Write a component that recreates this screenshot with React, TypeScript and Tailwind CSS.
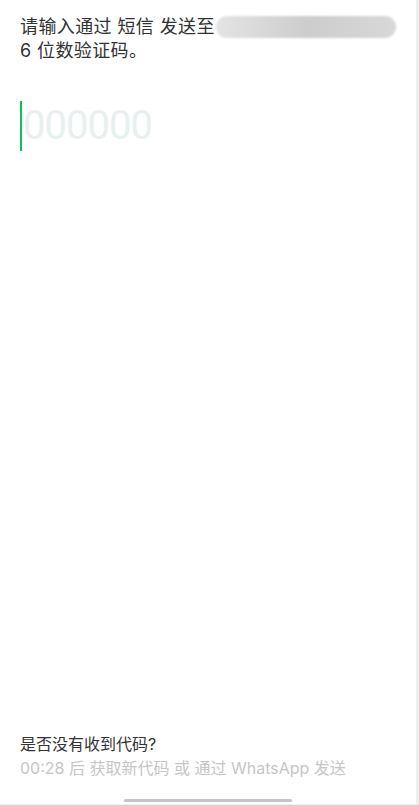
export default function App() {
  return (
    <div className="h-[805px] w-full bg-white border-r-[3px] border-[#efefef] flex flex-col font-['Inter','Noto_Sans_CJK_SC',sans-serif] overflow-hidden">
      {/* Prompt */}
      <div className="px-5 pt-[15px] text-[18px] leading-[24px] text-[#333333] tracking-[0.4px]">
        <div className="flex items-center whitespace-nowrap">
          <span>请输入通过 短信 发送至</span>
          <span className="ml-[1px] inline-block w-[188px] h-[22px] rounded-full bg-gradient-to-r from-[#e4e4e4] via-[#cdcdcd] to-[#d8d8d8] blur-[1px]" />
        </div>
        <div>6 位数验证码。</div>
      </div>

      {/* Code input */}
      <div className="px-5 mt-[38px] flex items-center h-[50px]">
        <div className="w-[2px] h-[50px] bg-[#07c160]" />
        <span className="ml-[1px] font-['Roboto',sans-serif] text-[40px] leading-none text-[#e8efef] tracking-[-1px]">000000</span>
      </div>

      {/* Resend */}
      <div className="mt-auto px-5 pb-[19px] text-[16px] leading-[24px]">
        <div className="text-[#333333]">是否没有收到代码?</div>
        <div className="text-[#c6c6c6] whitespace-nowrap">00:28 后 获取新代码 或 通过 WhatsApp 发送</div>
      </div>

      {/* Home indicator */}
      <div className="flex justify-center pb-[2px]">
        <div className="w-[168px] h-[3px] rounded-full bg-[#c4c4c4]" />
      </div>
      <div className="h-[1px] bg-[#ededed]" />
    </div>
  );
}
